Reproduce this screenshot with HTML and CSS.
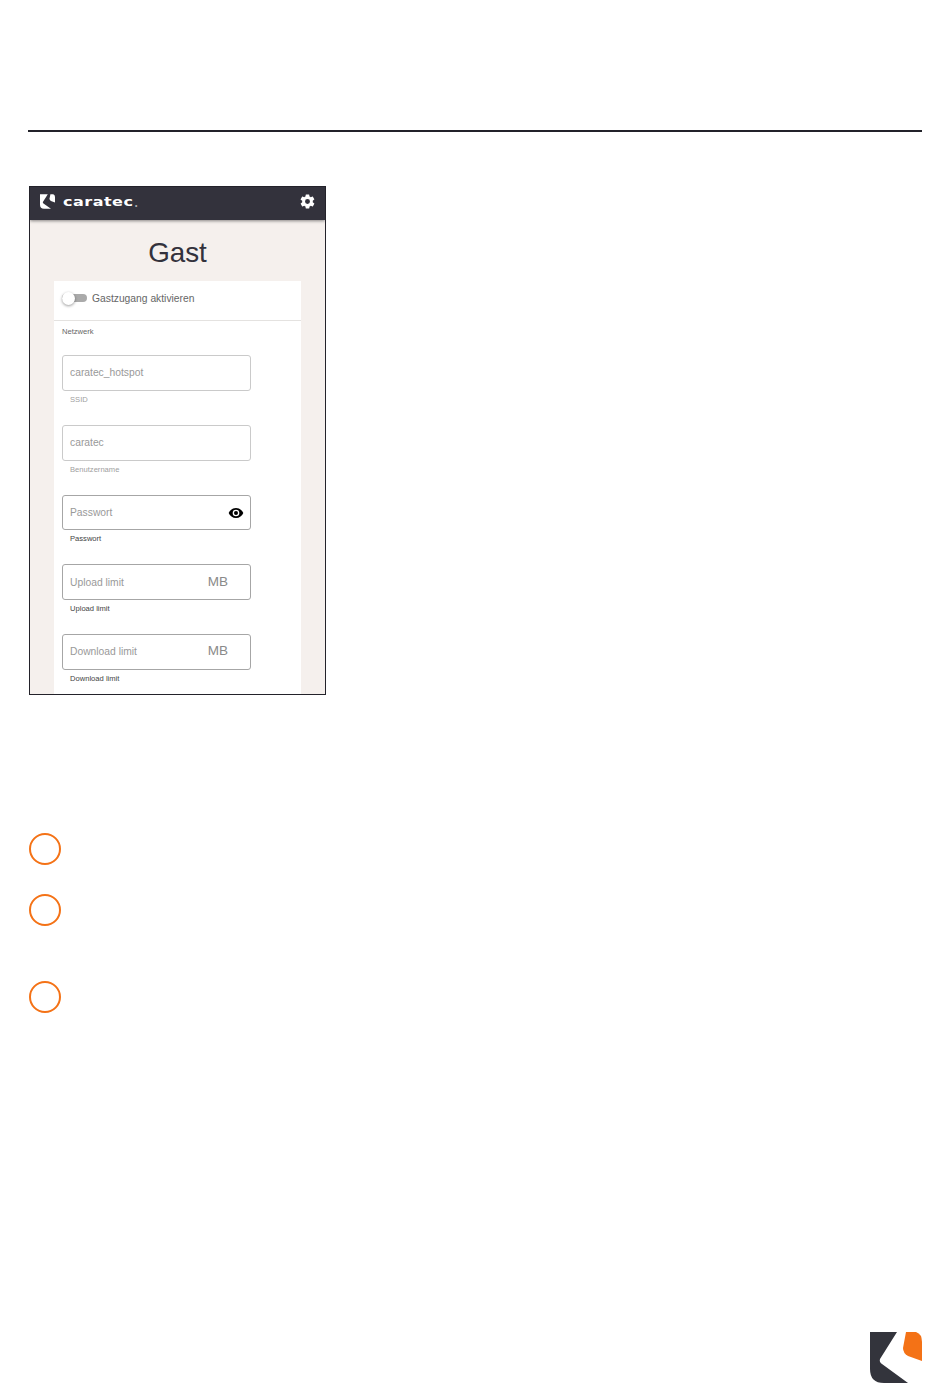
FILE: index.html
```html
<!DOCTYPE html>
<html lang="de">
<head>
    <meta charset="UTF-8">
    <title>Gast</title>
    <link rel="stylesheet" href="styles.css">
</head>
<body>
    <div class="sheet">
        <hr class="rule">

        <!-- App screenshot -->
        <div class="phone">
            <div class="topbar">
                <svg class="brand-mark" viewBox="0 0 52 51">
                    <path fill="#fff" d="M0 0H27L10 27Q9 30 12 32L38 51H14Q0 51 0 37Z"/>
                    <path fill="#fff" d="M36 0H46Q52 2 52 10V29L38 24Q33 21 33 16Z"/>
                </svg>
                <span class="brand-name">caratec</span><span class="brand-dot">.</span>
                <svg class="gear" viewBox="0 0 24 24">
                    <path fill="#fff" d="M19.4 13c.04-.3.1-.65.1-1s-.03-.7-.1-1l2.1-1.65c.2-.15.25-.42.12-.64l-2-3.46c-.12-.22-.4-.3-.6-.22l-2.5 1c-.52-.4-1.08-.73-1.7-.98l-.37-2.65A.5.5 0 0 0 14 2h-4a.5.5 0 0 0-.5.42l-.37 2.65c-.62.25-1.18.59-1.7.98l-2.5-1c-.22-.08-.48 0-.6.22l-2 3.46c-.13.22-.07.49.12.64L4.55 11c-.05.32-.05.66-.05 1s.02.68.06 1l-2.1 1.65c-.2.15-.25.42-.12.64l2 3.46c.12.22.39.3.61.22l2.49-1c.52.4 1.08.73 1.7.98l.37 2.65c.04.24.25.42.5.42h4c.25 0 .46-.18.5-.42l.37-2.65c.62-.25 1.18-.58 1.7-.98l2.48 1c.23.08.5 0 .61-.22l2-3.46c.13-.22.07-.49-.12-.64L19.4 13zM12 15.5a3.5 3.5 0 1 1 0-7 3.5 3.5 0 0 1 0 7z"/>
                </svg>
            </div>

            <div class="content">
                <h1 class="title">Gast</h1>

                <div class="card">
                    <div class="toggle-row">
                        <span class="toggle"><span class="knob"></span></span>
                        <span class="toggle-label">Gastzugang aktivieren</span>
                    </div>

                    <div class="form">
                        <p class="section-label">Netzwerk</p>

                        <div class="field">
                            <div class="input"><span class="value">caratec_hotspot</span></div>
                            <p class="hint hint-pale">SSID</p>
                        </div>
                        <div class="field">
                            <div class="input"><span class="value">caratec</span></div>
                            <p class="hint hint-pale">Benutzername</p>
                        </div>
                        <div class="field">
                            <div class="input input-dark">
                                <span class="value">Passwort</span>
                                <svg class="eye" viewBox="0 0 24 24">
                                    <path fill="#000" d="M12 4.5C7 4.5 2.73 7.61 1 12c1.73 4.39 6 7.5 11 7.5s9.27-3.11 11-7.5c-1.73-4.39-6-7.5-11-7.5zM12 17a5 5 0 1 1 0-10 5 5 0 0 1 0 10zm0-8a3 3 0 1 0 0 6 3 3 0 0 0 0-6z"/>
                                </svg>
                            </div>
                            <p class="hint">Passwort</p>
                        </div>
                        <div class="field">
                            <div class="input input-dark">
                                <span class="value">Upload limit</span>
                                <span class="unit">MB</span>
                            </div>
                            <p class="hint">Upload limit</p>
                        </div>
                        <div class="field">
                            <div class="input input-dark">
                                <span class="value">Download limit</span>
                                <span class="unit">MB</span>
                            </div>
                            <p class="hint">Download limit</p>
                        </div>
                    </div>
                </div>
            </div>
        </div>

        <div class="steps">
            <span class="step step-one"></span>
            <span class="step step-two"></span>
            <span class="step step-three"></span>
        </div>

        <svg class="corner-logo" viewBox="0 0 52 51">
            <path fill="#33343c" d="M0 0H27L10 27Q9 30 12 32L38 51H14Q0 51 0 37Z"/>
            <path fill="#f47216" d="M36 0H46Q52 2 52 10V29L38 24Q33 21 33 16Z"/>
        </svg>
    </div>
</body>
</html>
```

FILE: styles.css
```css
* {
    box-sizing: border-box;
}

html, body {
    margin: 0;
    padding: 0;
    background: #fff;
}

body {
    font-family: "Liberation Sans", Arial, sans-serif;
}

.sheet {
    display: flex;
    flex-direction: column;
    height: 1383px;
    padding: 130px 28px 0 29px;
    overflow: hidden;
}

.rule {
    width: 894px;
    height: 2px;
    margin: 0 0 54px -1px;
    border: none;
    background: #23222a;
}

/* screenshot frame */
.phone {
    width: 297px;
    height: 509px;
    border: 1px solid #23222a;
    overflow: hidden;
    background: #f5f0ed;
    flex-shrink: 0;
}

.topbar {
    display: flex;
    align-items: center;
    height: 33px;
    padding: 0 9.5px 4px 10px;
    background: #33323c;
    box-shadow: 0 1px 3px rgba(0, 0, 0, 0.45);
}

.brand-mark {
    width: 15px;
    height: 15px;
    margin-right: 8px;
}

.brand-name {
    font-family: "DejaVu Sans", sans-serif;
    font-size: 16px;
    font-weight: bold;
    letter-spacing: 0.5px;
    color: #fff;
    transform: scaleY(0.75);
    transform-origin: center;
}

.brand-dot {
    margin: 2px 0 0 1px;
    font-size: 12px;
    font-weight: bold;
    color: #a9a9ad;
}

.gear {
    width: 17px;
    height: 17px;
    margin-left: auto;
}

.content {
    padding: 0 24px;
}

.title {
    margin: 0;
    padding-top: 17px;
    height: 61px;
    font-size: 27.8px;
    line-height: 32px;
    font-weight: normal;
    text-align: center;
    color: #33323c;
}

.card {
    width: 247px;
    height: 420px;
    background: #fff;
}

.toggle-row {
    display: flex;
    align-items: center;
    height: 40px;
    padding: 0 0 5px 8px;
    border-bottom: 1px solid #e4e2e0;
}

.toggle {
    position: relative;
    width: 25px;
    height: 8px;
    margin-right: 5px;
    border-radius: 4px;
    background: #aaa;
}

.knob {
    position: absolute;
    left: 0;
    top: -2.5px;
    width: 13px;
    height: 13px;
    border-radius: 50%;
    background: #fff;
    box-shadow: 0 1px 3px rgba(0, 0, 0, 0.4);
}

.toggle-label {
    font-size: 10.3px;
    color: #666;
}

.form {
    padding: 6px 0 0 8px;
}

.section-label {
    margin: 0 0 19px;
    font-size: 7.6px;
    line-height: 9px;
    color: #666;
}

.field {
    height: 69.75px;
}

.input {
    display: flex;
    align-items: center;
    width: 189px;
    height: 35.75px;
    padding: 0 7px;
    border: 1px solid #cacaca;
    border-radius: 3px;
}

.input-dark {
    border-color: #a6a6a6;
}

.value {
    font-size: 10.3px;
    color: #999;
}

.unit {
    margin: -2px 15px 0 auto;
    font-size: 13.5px;
    color: #8a8a8a;
}

.eye {
    width: 16px;
    height: 16px;
    margin: 2px -1px 0 auto;
}

.hint {
    margin: 4px 0 0 8px;
    font-size: 7.6px;
    line-height: 9px;
    color: #444;
}

.hint-pale {
    color: #a0a0a0;
}

/* orange rings */
.steps {
    display: flex;
    flex-direction: column;
    margin-top: 138px;
}

.step {
    display: block;
    width: 32px;
    height: 32px;
    border: 2.5px solid #f47216;
    border-radius: 50%;
}

.step-two {
    margin-top: 29px;
}

.step-three {
    margin-top: 55px;
}

.corner-logo {
    width: 52px;
    height: 51px;
    margin-top: auto;
    align-self: flex-end;
    flex-shrink: 0;
}
```
